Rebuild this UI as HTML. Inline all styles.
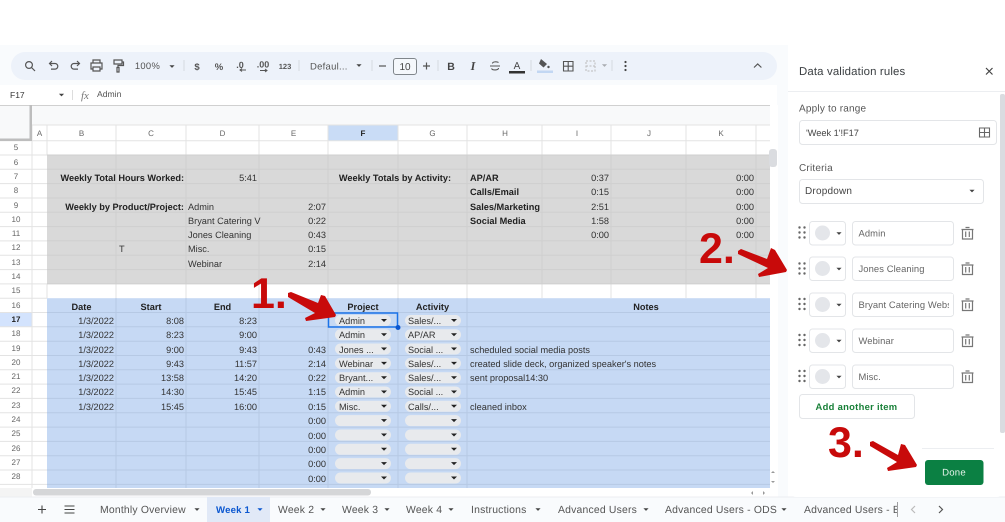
<!DOCTYPE html>
<html><head><meta charset="utf-8"><style>
html,body{margin:0;padding:0;background:#fff}
svg{display:block;filter:blur(.35px)}
text{font-family:"Liberation Sans",sans-serif;font-size:9.2px;fill:#333;text-rendering:geometricPrecision}
.r{text-anchor:end}.c{text-anchor:middle}.b{font-weight:bold;fill:#222}
.h{font-size:8px;fill:#666;text-anchor:middle}
.t{font-size:10.4px;fill:#555;letter-spacing:.2px}
.s{font-size:10px;fill:#555;letter-spacing:.2px}
.d{font-size:9.4px;fill:#666;letter-spacing:.1px}
.red{font-weight:bold;font-size:43px;fill:#c80a0a}
.i{fill:none;stroke:#555;stroke-width:1.2}
</style></head><body>
<svg width="1005" height="522" viewBox="0 0 1005 522" xmlns="http://www.w3.org/2000/svg">
<defs>
<g id="chip"><rect x="0" y="-5.5" width="56" height="11" rx="5.5" fill="#e8eaed"/><path d="M46-1.5h6l-3 3z" fill="#222"/></g>
<g id="drag" fill="#666"><circle cx="0" cy="-5" r="1.2"/><circle cx="5" cy="-5" r="1.2"/><circle cx="0" cy="0" r="1.2"/><circle cx="5" cy="0" r="1.2"/><circle cx="0" cy="5" r="1.2"/><circle cx="5" cy="5" r="1.2"/></g>
<g id="trash" fill="none" stroke="#777" stroke-width="1.2"><path d="M-5-4H5V5.5H-5zM-6-4H6M-2-6H2M-1.8-2V3.5M1.8-2V3.5"/></g>
<g id="tri"><path d="M-2.6-1.3h5.2L0 1.4z" fill="#444"/></g>
</defs>
<rect width="1005" height="522" fill="#fff"/>
<rect x="0" y="45" width="788" height="60" fill="#f9fbfd"/>
<rect x="11" y="52" width="766" height="28" rx="14" fill="#edf2fa"/>
<rect x="0" y="85" width="777" height="20" fill="#fff"/>

<!-- toolbar -->
<g class="i">
<circle cx="29" cy="65" r="3.4"/><path d="M31.5 67.5l3.5 3.5"/>
<path d="M50 63.5h5a2.8 2.8 0 0 1 0 5.6h-4M52 61l-2.5 2.5 2.5 2.5"/>
<path d="M79 63.5h-5a2.8 2.8 0 0 0 0 5.6h4M77 61l2.5 2.5-2.5 2.5"/>
<path d="M93 63V60h7v3M93 69h-2v-6h11v6h-2M93 67h7v4h-7z"/>
<path d="M114 60h8v4h-8zM122 62h1.5v3.500H118v2M117 67.5h2V72h-2z"/>
</g>
<text x="147.5" y="69" class="c" style="font-size:9.4px;fill:#555;letter-spacing:.3px">100%</text>
<use href="#tri" x="172" y="66.5"/>
<path d="M184 60v11M299 60v11M372 60v11M438 60v11M531 60v11M612 60v11" stroke="#d5d9e0" stroke-width="1"/>
<text x="197" y="70" class="c" style="font-size:9.5px;fill:#555;font-weight:bold">$</text>
<text x="219" y="70" class="c" style="font-size:9.5px;fill:#555;font-weight:bold">%</text>
<text x="240" y="68" class="c" style="font-size:9px;fill:#555;font-weight:bold">.0</text>
<path d="M240 70h6M242 68.5l-2 1.5 2 1.500" stroke="#555" fill="none"/>
<text x="263" y="67.5" class="c" style="font-size:9px;fill:#555;font-weight:bold">.00</text>
<path d="M260 70.5h7M265 69l2 1.5-2 1.500" stroke="#555" fill="none"/>
<text x="285" y="69" class="c" style="font-size:7.5px;fill:#555;font-weight:bold">123</text>
<text x="310" y="69.500" style="font-size:9.5px;fill:#555;letter-spacing:.25px">Defaul...</text>
<use href="#tri" x="359" y="65.5"/>
<path d="M379 66h7" stroke="#555" stroke-width="1.2"/>
<rect x="393.5" y="58.5" width="23" height="16" rx="2.5" fill="#f5f8fc" stroke="#80868b"/>
<text x="405" y="70" class="c" style="font-size:10px;fill:#444">10</text>
<path d="M423 66h7M426.5 62.5v7" stroke="#555" stroke-width="1.2"/>
<text x="451" y="70" class="c" style="font-size:10.5px;fill:#444;font-weight:bold">B</text>
<text x="473" y="70" class="c" style="font-size:12px;fill:#444;font-weight:bold;font-style:italic;font-family:'Liberation Serif',serif">I</text>
<path d="M490 66h10M498.5 62.5c-1.5-1-6-1-6 1M491.500 68.500c1 2 7 2 7-.5" fill="none" stroke="#555" stroke-width="1.1"/>
<text x="517" y="69" class="c" style="font-size:10px;fill:#444">A</text>
<rect x="509" y="71" width="16" height="2.5" fill="#333"/>
<path d="M541 59l6 5-3.500 3.500-4.500-4z" fill="#555"/><circle cx="548.500" cy="67" r="1.2" fill="#555"/>
<rect x="537" y="70.5" width="16" height="2.5" fill="#c2d7f3"/>
<path d="M563.500 61.500h9.500v9.500h-9.500zM568.200 61.500v9.500M563.500 66.200h9.500" fill="none" stroke="#555" stroke-width="1.1"/>
<path d="M586 61h9v10h-9zM586 66h9" fill="none" stroke="#bbb" stroke-dasharray="2 1.5"/>
<use href="#tri" x="604.500" y="65.5" opacity=".4"/>
<g fill="#444"><circle cx="625.500" cy="62" r="1.1"/><circle cx="625.500" cy="66" r="1.1"/><circle cx="625.500" cy="70" r="1.1"/></g>
<path d="M754 67.5l3.700-3.500 3.700 3.500" fill="none" stroke="#555" stroke-width="1.2"/>

<!-- formula bar -->
<text x="10" y="98" style="font-size:8.500px;fill:#333">F17</text>
<use href="#tri" x="61.5" y="95"/>
<path d="M72.5 90v10" stroke="#ddd"/>
<text x="81" y="99" style="font-size:11px;font-style:italic;fill:#777;font-family:'Liberation Serif',serif">fx</text>
<text x="97" y="97" style="font-size:8.600px;fill:#555">Admin</text>

<!-- grid header -->
<rect x="0" y="105" width="770" height="36" fill="#f8f9fa"/>
<path d="M0 105.5H777" stroke="#d0d0d0"/>
<rect x="32" y="125" width="738" height="16" fill="#fff"/>
<rect x="328" y="125" width="70" height="16" fill="#c9dcf6"/>
<rect x="0" y="141" width="770" height="348" fill="#fff"/>
<rect x="0" y="312.5" width="32" height="14.3" fill="#d3e3fd"/>
<rect x="47" y="155" width="723" height="129" fill="#d9d9d9"/>
<rect x="47" y="298.2" width="723" height="190" fill="#c6d9f4"/>
<path d="M32 125h738M0 140.700h770M0 155h47M0 169.300h47M0 183.600h47M0 198h47M0 212.300h47M0 226.600h47M0 240.900h47M0 255.200h47M0 269.600h47M0 283.900h47M0 298.200h47M0 312.500h47M0 326.800h47M0 341.200h47M0 355.500h47M0 369.800h47M0 384.100h47M0 398.400h47M0 412.800h47M0 427.100h47M0 441.400h47M0 455.700h47M0 470h47M0 484.400h47M32 125V489M47 125V155M116 125V155M186 125V155M259 125V155M328 125V155M398 125V155M467 125V155M542 125V155M611 125V155M686 125V155M756 125V155M47 284V298M116 284V298M186 284V298M259 284V298M328 284V298M398 284V298M467 284V298M542 284V298M611 284V298M686 284V298M756 284V298" stroke="#e3e3e3" fill="none"/>
<path d="M47 155h723M47 169.300h723M47 183.600h723M47 198h723M47 212.300h723M47 226.600h723M47 240.900h723M47 255.200h723M47 269.600h723M47 283.900h723M116 155V284M186 155V284M259 155V284M328 155V284M398 155V284M467 155V284M542 155V284M611 155V284M686 155V284M756 155V284" stroke="#cfcfcf" fill="none"/>
<path d="M47 312.500h723M47 326.800h723M47 341.200h723M47 355.500h723M47 369.800h723M47 384.100h723M47 398.400h723M47 412.800h723M47 427.100h723M47 441.400h723M47 455.700h723M47 470h723M47 484.400h723M116 298V488M186 298V488M259 298V488M328 298V488M398 298V488M467 298V488" stroke="#b6c9e4" fill="none"/>
<rect x="29.5" y="105" width="2.5" height="36" fill="#bdbdbd"/>
<rect x="0" y="138.500" width="32" height="2.5" fill="#bdbdbd"/>

<!-- headers -->
<g class="h">
<text class="h" x="39.5" y="136">A</text><text class="h" x="81.5" y="136">B</text><text class="h" x="151" y="136">C</text><text class="h" x="222.5" y="136">D</text><text class="h" x="293.5" y="136">E</text><text class="h" x="363" y="136" style="fill:#222;font-weight:bold">F</text><text class="h" x="432.5" y="136">G</text><text class="h" x="505" y="136">H</text><text class="h" x="577" y="136">I</text><text class="h" x="649" y="136">J</text><text class="h" x="721" y="136">K</text>
<text class="h" x="16" y="150">5</text><text class="h" x="16" y="165">6</text><text class="h" x="16" y="179">7</text><text class="h" x="16" y="193">8</text><text class="h" x="16" y="208">9</text><text class="h" x="16" y="222">10</text><text class="h" x="16" y="236">11</text><text class="h" x="16" y="250">12</text><text class="h" x="16" y="265">13</text><text class="h" x="16" y="279">14</text><text class="h" x="16" y="293">15</text><text class="h" x="16" y="308">16</text><text class="h" x="16" y="322" style="fill:#222;font-weight:bold">17</text><text class="h" x="16" y="336">18</text><text class="h" x="16" y="351">19</text><text class="h" x="16" y="365">20</text><text class="h" x="16" y="379">21</text><text class="h" x="16" y="393">22</text><text class="h" x="16" y="408">23</text><text class="h" x="16" y="422">24</text><text class="h" x="16" y="436">25</text><text class="h" x="16" y="451">26</text><text class="h" x="16" y="465">27</text><text class="h" x="16" y="479">28</text>
</g>

<!-- gray block -->
<text x="184" y="181" class="r b">Weekly Total Hours Worked:</text>
<text x="257" y="181" class="r">5:41</text>
<text x="451" y="181" class="r b">Weekly Totals by Activity:</text>
<text x="470" y="181" class="b">AP/AR</text><text x="609" y="181" class="r">0:37</text><text x="754" y="181" class="r">0:00</text>
<text x="470" y="195" class="b">Calls/Email</text><text x="609" y="195" class="r">0:15</text><text x="754" y="195" class="r">0:00</text>
<text x="184" y="210" class="r b">Weekly by Product/Project:</text>
<text x="188" y="210">Admin</text><text x="326" y="210" class="r">2:07</text>
<text x="470" y="210" class="b">Sales/Marketing</text><text x="609" y="210" class="r">2:51</text><text x="754" y="210" class="r">0:00</text>
<text x="188" y="224">Bryant Catering V</text><text x="326" y="224" class="r">0:22</text>
<text x="470" y="224" class="b">Social Media</text><text x="609" y="224" class="r">1:58</text><text x="754" y="224" class="r">0:00</text>
<text x="188" y="238">Jones Cleaning</text><text x="326" y="238" class="r">0:43</text>
<text x="609" y="238" class="r">0:00</text><text x="754" y="238" class="r">0:00</text>
<text x="119" y="252">T</text>
<text x="188" y="252">Misc.</text><text x="326" y="252" class="r">0:15</text>
<text x="188" y="267">Webinar</text><text x="326" y="267" class="r">2:14</text>

<!-- table -->
<text x="81.5" y="310" class="c b">Date</text><text x="151" y="310" class="c b">Start</text><text x="222.5" y="310" class="c b">End</text><text x="363" y="310" class="c b">Project</text><text x="432.5" y="310" class="c b">Activity</text><text x="646" y="310" class="c b">Notes</text>
<text x="114" y="324" class="r">1/3/2022</text><text x="184" y="324" class="r">8:08</text><text x="257" y="324" class="r">8:23</text>
<text x="114" y="338" class="r">1/3/2022</text><text x="184" y="338" class="r">8:23</text><text x="257" y="338" class="r">9:00</text>
<text x="114" y="353" class="r">1/3/2022</text><text x="184" y="353" class="r">9:00</text><text x="257" y="353" class="r">9:43</text><text x="326" y="353" class="r">0:43</text>
<text x="114" y="367" class="r">1/3/2022</text><text x="184" y="367" class="r">9:43</text><text x="257" y="367" class="r">11:57</text><text x="326" y="367" class="r">2:14</text>
<text x="114" y="381" class="r">1/3/2022</text><text x="184" y="381" class="r">13:58</text><text x="257" y="381" class="r">14:20</text><text x="326" y="381" class="r">0:22</text>
<text x="114" y="395" class="r">1/3/2022</text><text x="184" y="395" class="r">14:30</text><text x="257" y="395" class="r">15:45</text><text x="326" y="395" class="r">1:15</text>
<text x="114" y="410" class="r">1/3/2022</text><text x="184" y="410" class="r">15:45</text><text x="257" y="410" class="r">16:00</text><text x="326" y="410" class="r">0:15</text>
<text x="326" y="424" class="r">0:00</text><text x="326" y="439" class="r">0:00</text><text x="326" y="453" class="r">0:00</text><text x="326" y="467" class="r">0:00</text><text x="326" y="482" class="r">0:00</text>
<text x="470" y="353">scheduled social media posts</text>
<text x="470" y="367">created slide deck, organized speaker's notes</text>
<text x="470" y="381">sent proposal14:30</text>
<text x="470" y="410">cleaned inbox</text>

<!-- chips -->
<use href="#chip" x="335" y="320.500"/><use href="#chip" x="405" y="320.500"/>
<use href="#chip" x="335" y="334.700"/><use href="#chip" x="405" y="334.700"/>
<use href="#chip" x="335" y="349"/><use href="#chip" x="405" y="349"/>
<use href="#chip" x="335" y="363.400"/><use href="#chip" x="405" y="363.400"/>
<use href="#chip" x="335" y="377.700"/><use href="#chip" x="405" y="377.700"/>
<use href="#chip" x="335" y="392"/><use href="#chip" x="405" y="392"/>
<use href="#chip" x="335" y="406.300"/><use href="#chip" x="405" y="406.300"/>
<use href="#chip" x="335" y="420.600"/><use href="#chip" x="405" y="420.600"/>
<use href="#chip" x="335" y="435"/><use href="#chip" x="405" y="435"/>
<use href="#chip" x="335" y="449.300"/><use href="#chip" x="405" y="449.300"/>
<use href="#chip" x="335" y="463.600"/><use href="#chip" x="405" y="463.600"/>
<use href="#chip" x="335" y="478"/><use href="#chip" x="405" y="478"/>
<text x="339" y="324">Admin</text><text x="408" y="324">Sales/...</text>
<text x="339" y="338">Admin</text><text x="408" y="338">AP/AR</text>
<text x="339" y="353">Jones ...</text><text x="408" y="353">Social ...</text>
<text x="339" y="367">Webinar</text><text x="408" y="367">Sales/...</text>
<text x="339" y="381">Bryant...</text><text x="408" y="381">Sales/...</text>
<text x="339" y="395">Admin</text><text x="408" y="395">Social ...</text>
<text x="339" y="410">Misc.</text><text x="408" y="410">Calls/...</text>
<rect x="328.5" y="313" width="69" height="14" fill="none" stroke="#1a73e8" stroke-width="1.5"/>
<circle cx="398" cy="327.5" r="2.5" fill="#0b57d0"/>

<!-- scrollbars -->
<rect x="770" y="105" width="8" height="392" fill="#fff"/>
<rect x="778" y="45" width="10" height="452" fill="#f9fbfd"/>
<rect x="769" y="149" width="8" height="18" rx="3" fill="#dadce0"/>
<rect x="0" y="488" width="770" height="9" fill="#fff"/>
<rect x="0" y="488" width="32" height="9" fill="#f4f4f4"/>
<rect x="33" y="489" width="338" height="6.5" rx="3" fill="#d5d6d8"/>
<path d="M771 473l2-2 2 2zM771 481l2 2 2-2zM753 491l-2 2 2 2zM763 491l2 2-2 2z" fill="#999"/>

<!-- tabs -->
<rect x="0" y="497" width="1005" height="25" fill="#f9fbfd"/>
<path d="M0 497h1005" stroke="#eceef1"/>
<rect x="207" y="497" width="63" height="25" fill="#e1e9f7"/>
<path d="M38 509.500h8M42 505.500v8" stroke="#444" stroke-width="1.1"/>
<path d="M64.500 506h10M64.500 509.500h10M64.500 513h10" stroke="#444" stroke-width="1.1"/>
<text x="100" y="513" class="t">Monthly Overview</text><use href="#tri" x="197" y="509.5"/>
<text x="216" y="513" style="font-size:9.600px;fill:#0b57d0;font-weight:bold;letter-spacing:.2px">Week 1</text><path d="M257.400 508.200h5.200L260 510.900z" fill="#0b57d0"/>
<text x="278" y="513" class="t">Week 2</text><use href="#tri" x="323" y="509.5"/>
<text x="342" y="513" class="t">Week 3</text><use href="#tri" x="387" y="509.5"/>
<text x="406" y="513" class="t">Week 4</text><use href="#tri" x="451" y="509.5"/>
<text x="471" y="513" class="t">Instructions</text><use href="#tri" x="538" y="509.5"/>
<text x="558" y="513" class="t">Advanced Users</text><use href="#tri" x="646" y="509.5"/>
<text x="665" y="513" class="t">Advanced Users - ODS</text><use href="#tri" x="784" y="509.5"/>
<text x="804" y="513" class="t">Advanced Users - E</text>
<rect x="897" y="498" width="108" height="24" fill="#f9fbfd"/>
<path d="M897.500 502v15" stroke="#888" stroke-width=".8"/>
<path d="M915 506l-3.500 3.500 3.500 3.500" fill="none" stroke="#bbb" stroke-width="1.2"/>
<path d="M939 506l3.500 3.500-3.500 3.500" fill="none" stroke="#555" stroke-width="1.2"/>

<!-- sidebar -->
<rect x="788" y="52" width="217" height="445" rx="8" fill="#fff"/>
<text x="799" y="75" style="font-size:11.400px;fill:#3c4043;letter-spacing:.15px">Data validation rules</text>
<path d="M986 68l6.500 6.500M992.500 68L986 74.500" stroke="#444" stroke-width="1.2"/>
<path d="M788 91.500h217" stroke="#eceef1"/>
<rect x="1000" y="94" width="5" height="339" rx="2" fill="#dadce0"/>
<text x="799" y="111.5" class="s">Apply to range</text>
<rect x="799.500" y="120.500" width="197" height="24" rx="3" fill="#fff" stroke="#e3e5e8"/>
<text x="806" y="136" style="font-size:9.200px;fill:#444">'Week 1'!F17</text>
<path d="M979.500 128h10v9h-10zM984.500 128v9M979.500 132.500h10" fill="none" stroke="#666" stroke-width="1.1"/>
<text x="799" y="171" class="s">Criteria</text>
<rect x="799.500" y="179.500" width="184" height="24" rx="3" fill="#fff" stroke="#e3e5e8"/>
<text x="805" y="194" class="s" style="fill:#444">Dropdown</text>
<use href="#tri" x="972" y="191"/>

<use href="#drag" x="799.5" y="232.5"/><rect x="809.5" y="221.5" width="36" height="23.5" rx="3" fill="#fff" stroke="#e3e5e8"/><circle cx="822.5" cy="233" r="7.5" fill="#e4e6ea"/><use href="#tri" x="839" y="233.5"/><rect x="852.5" y="221.5" width="101" height="23.5" rx="3" fill="#fff" stroke="#e3e5e8"/><text x="858.5" y="236.5" class="d">Admin</text><use href="#trash" x="967.5" y="233.5"/>
<use href="#drag" x="799.5" y="268.5"/><rect x="809.5" y="257" width="36" height="23.5" rx="3" fill="#fff" stroke="#e3e5e8"/><circle cx="822.5" cy="268.5" r="7.5" fill="#e4e6ea"/><use href="#tri" x="839" y="269"/><rect x="852.5" y="257" width="101" height="23.5" rx="3" fill="#fff" stroke="#e3e5e8"/><text x="858.5" y="272" class="d">Jones Cleaning</text><use href="#trash" x="967.5" y="269"/>
<use href="#drag" x="799.5" y="304"/><rect x="809.5" y="293" width="36" height="23.5" rx="3" fill="#fff" stroke="#e3e5e8"/><circle cx="822.5" cy="304.5" r="7.5" fill="#e4e6ea"/><use href="#tri" x="839" y="305"/><rect x="852.5" y="293" width="101" height="23.5" rx="3" fill="#fff" stroke="#e3e5e8"/><text x="858.5" y="308" class="d">Bryant Catering Webs</text><rect x="949" y="294" width="4" height="21" fill="#fff"/><use href="#trash" x="967.5" y="305"/>
<use href="#drag" x="799.5" y="340"/><rect x="809.5" y="329" width="36" height="23.5" rx="3" fill="#fff" stroke="#e3e5e8"/><circle cx="822.5" cy="340.5" r="7.5" fill="#e4e6ea"/><use href="#tri" x="839" y="341"/><rect x="852.5" y="329" width="101" height="23.5" rx="3" fill="#fff" stroke="#e3e5e8"/><text x="858.5" y="344" class="d">Webinar</text><use href="#trash" x="967.5" y="341"/>
<use href="#drag" x="799.5" y="376"/><rect x="809.5" y="365" width="36" height="23.5" rx="3" fill="#fff" stroke="#e3e5e8"/><circle cx="822.5" cy="376.5" r="7.5" fill="#e4e6ea"/><use href="#tri" x="839" y="377"/><rect x="852.5" y="365" width="101" height="23.5" rx="3" fill="#fff" stroke="#e3e5e8"/><text x="858.5" y="380" class="d">Misc.</text><use href="#trash" x="967.5" y="377"/>

<rect x="799.5" y="394.5" width="115" height="24" rx="3" fill="#fff" stroke="#e3e5e8"/>
<text x="856.5" y="410" class="c" style="font-size:9.400px;fill:#188038;letter-spacing:.3px;font-weight:bold">Add another item</text>
<path d="M922 448.500h72" stroke="#eceef1"/>
<rect x="925" y="460" width="58.5" height="25" rx="3" fill="#0b8043"/>
<text x="954" y="475.5" class="c" style="font-size:9.600px;fill:#e6f3ea;letter-spacing:.2px">Done</text>

<!-- annotations -->
<text x="251" y="308" class="red">1.</text>
<text x="699" y="263" class="red">2.</text>
<text x="828" y="457" class="red">3.</text>
<path d="M288 293L291 292L318 303L321 295L325 296L336 315L335 317L306 321L305 318L315 313L288 297z" fill="#c80a0a"/>
<path d="M738 251L741 249L767 259L771 248L775 250L787 270L786 272L759 277L758 274L768 268L738 254z" fill="#c80a0a"/>
<path d="M870 442L873 441L898 455L901 444L905 445L917 465L916 467L888 471L887 468L897 462L870 446z" fill="#c80a0a"/>
</svg>
</body></html>
